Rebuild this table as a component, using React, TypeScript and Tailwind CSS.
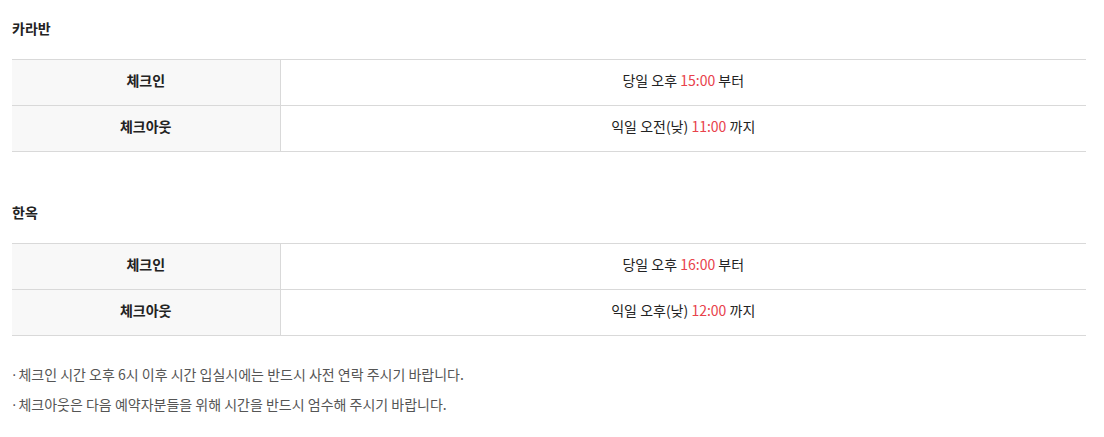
const TABLES = [
  {
    title: "카라반",
    rows: [
      { label: "체크인", pre: "당일 오후 ", time: "15:00", post: " 부터" },
      { label: "체크아웃", pre: "익일 오전(낮) ", time: "11:00", post: " 까지" },
    ],
  },
  {
    title: "한옥",
    rows: [
      { label: "체크인", pre: "당일 오후 ", time: "16:00", post: " 부터" },
      { label: "체크아웃", pre: "익일 오후(낮) ", time: "12:00", post: " 까지" },
    ],
  },
];

const NOTES = [
  "체크인 시간 오후 6시 이후 시간 입실시에는 반드시 사전 연락 주시기 바랍니다.",
  "체크아웃은 다음 예약자분들을 위해 시간을 반드시 엄수해 주시기 바랍니다.",
];

export default function App() {
  return (
    <div className="w-[1104px] h-[437px] bg-white pl-3 pr-[18px] pt-[18px] font-['Noto_Sans_CJK_KR','Noto_Sans',sans-serif] text-[#222]">
      {TABLES.map((t, i) => (
        <section key={t.title} className={i > 0 ? "mt-[50px]" : ""}>
          <h3 className="text-[14px] leading-5 font-bold">{t.title}</h3>
          <table className="mt-[21px] w-full border-collapse border-t border-[#d9d9d9] text-[14px]">
            <tbody>
              {t.rows.map((r) => (
                <tr key={r.label} className="h-[46px] border-b border-[#d9d9d9]">
                  <th className="w-[268px] border-r border-[#d9d9d9] bg-[#f8f8f8] pb-[4px] text-center font-bold">
                    {r.label}
                  </th>
                  <td className="pb-[4px] text-center">
                    {r.pre}
                    <span className="text-[#e8424b]">{r.time}</span>
                    {r.post}
                  </td>
                </tr>
              ))}
            </tbody>
          </table>
        </section>
      ))}
      <ul className="mt-7 flex flex-col gap-[9px] text-[14px] leading-5 text-[#555]">
        {NOTES.map((n) => (
          <li key={n}>
            <span className="mr-[2px] font-['DejaVu_Sans',sans-serif]">·</span>
            {n}
          </li>
        ))}
      </ul>
    </div>
  );
}
